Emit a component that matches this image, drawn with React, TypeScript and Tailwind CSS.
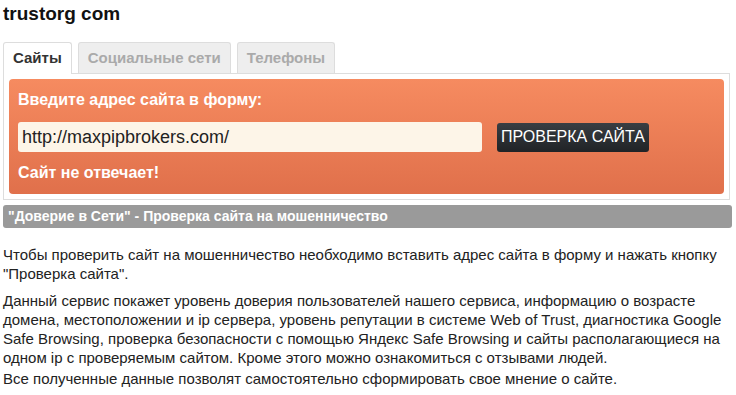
import React, { useState } from 'react';

const tabs = ['Сайты', 'Социальные сети', 'Телефоны'];

export default function App() {
  const [active, setActive] = useState(0);
  const [url, setUrl] = useState('http://maxpipbrokers.com/');

  return (
    <div className="w-[736px] h-[395px] bg-white overflow-hidden px-[3px] text-[#222]" style={{ fontFamily: '"Liberation Sans", Arial, sans-serif' }}>
      <h1 className="text-[19px] font-bold leading-[22px] pt-[3px] text-[#111]">trustorg com</h1>

      <div className="flex gap-[6px] mt-[17px] h-[31px]">
        {tabs.map((tab, i) => (
          <button
            key={tab}
            onClick={() => setActive(i)}
            className={
              i === active
                ? 'px-[9px] text-[15px] font-bold border border-[#ddd] border-b-0 rounded-t-[3px] bg-white text-[#333] relative z-10 h-[32px]'
                : 'px-[9px] text-[15px] font-bold border border-[#ddd] border-b-0 rounded-t-[3px] bg-[#eee] text-[#aaa]'
            }
          >
            {tab}
          </button>
        ))}
      </div>

      <div className="border border-[#ddd] w-[727px] p-[5px]">
        <div className="rounded-[4px] bg-gradient-to-b from-[#f68b60] to-[#e0704b] px-[9px] pt-[12px] pb-[10px] h-[115px]">
          <div className="text-white font-bold text-[16px] leading-[18px]">Введите адрес сайта в форму:</div>
          <div className="flex items-center mt-[13px]">
            <input
              value={url}
              onChange={(e) => setUrl(e.target.value)}
              className="w-[464px] h-[30px] rounded-[3px] bg-[#fdf5e8] px-[4px] text-[18px] text-[#222] outline-none"
            />
            <button className="ml-[15px] h-[29px] px-[4px] rounded-[3px] bg-gradient-to-b from-[#3a3e43] to-[#202326] text-white text-[16px]">
              ПРОВЕРКА САЙТА
            </button>
          </div>
          <div className="text-white font-bold text-[16px] leading-[18px] mt-[12px]">Сайт не отвечает!</div>
        </div>
      </div>

      <div className="mt-[5px] w-[729px] h-[23px] rounded-[3px] bg-[#9a9a9a] text-white font-bold text-[14px] leading-[23px] px-[5px]">
        "Доверие в Сети" - Проверка сайта на мошенничество
      </div>

      <div className="mt-[17px] text-[15px] leading-[19px] text-[#222] pr-[4px]">
        <p>Чтобы проверить сайт на мошенничество необходимо вставить адрес сайта в форму и нажать кнопку "Проверка сайта".</p>
        <p className="mt-[8px]">
          Данный сервис покажет уровень доверия пользователей нашего сервиса, информацию о возрасте домена, местоположении и ip сервера, уровень репутации в системе Web of Trust, диагностика Google Safe Browsing, проверка безопасности с помощью Яндекс Safe Browsing и сайты располагающиеся на одном ip с проверяемым сайтом. Кроме этого можно ознакомиться с отзывами людей.
        </p>
        <p className="mt-[2px]">Все полученные данные позволят самостоятельно сформировать свое мнение о сайте.</p>
      </div>
    </div>
  );
}
